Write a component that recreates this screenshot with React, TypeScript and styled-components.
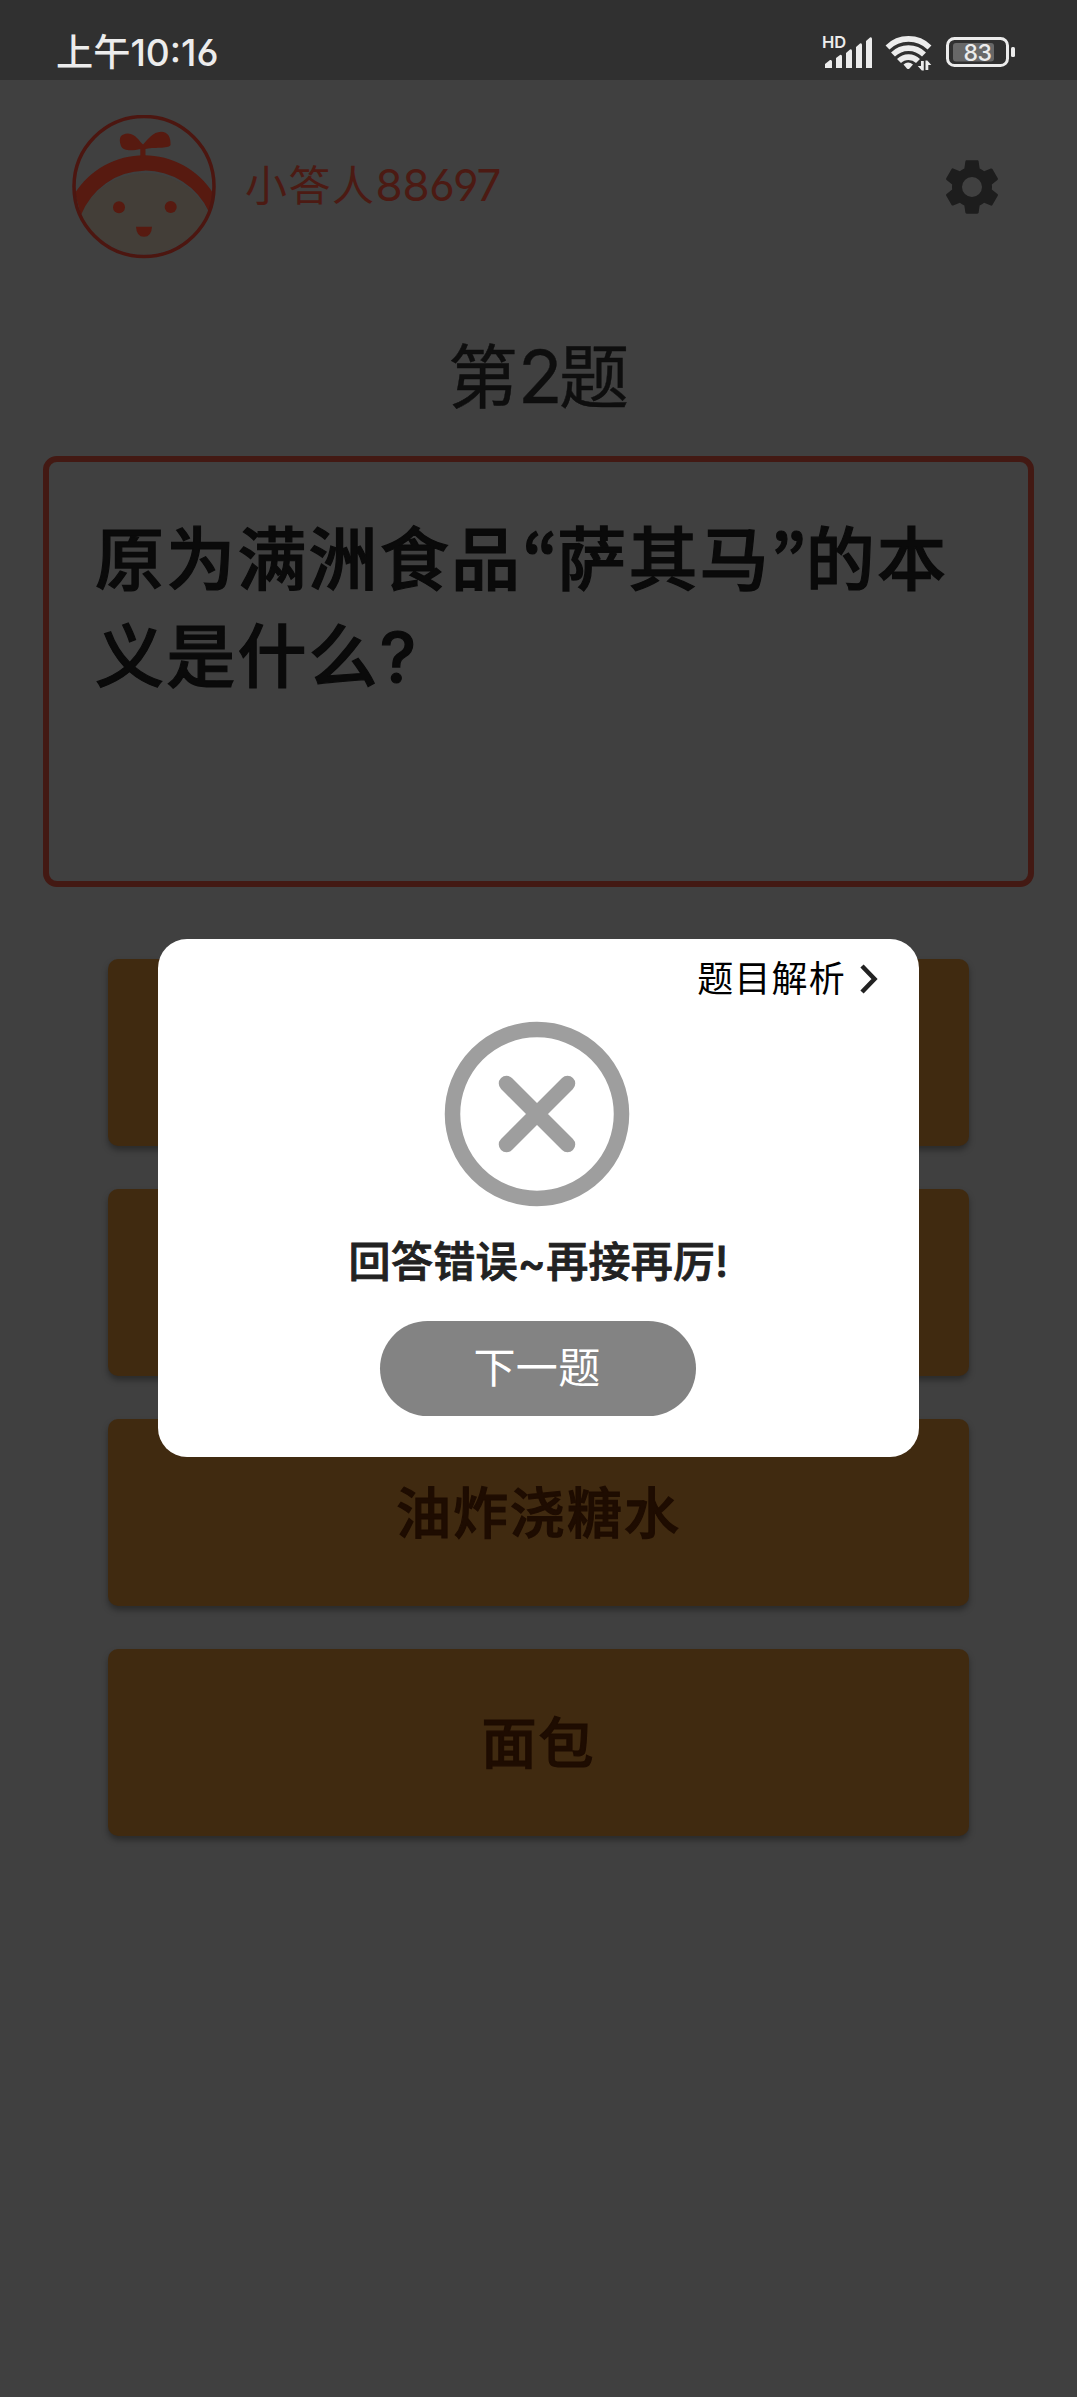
import React from "react";
import styled, { createGlobalStyle } from "styled-components";

const GlobalStyle = createGlobalStyle`
  html, body { margin: 0; padding: 0; background: #404040; }
  * { box-sizing: border-box; }
  body {
    font-family: Inter, "Noto Sans CJK SC", sans-serif;
    font-feature-settings: "cv03", "cv04";
  }
  button { font: inherit; border: 0; padding: 0; }
`;

const Screen = styled.div`
  width: 1077px;
  height: 2397px;
  display: flex;
  flex-direction: column;
  overflow: hidden;
  background: #404040;
`;

const StatusBar = styled.header`
  height: 80px;
  flex: none;
  padding: 25px 57px 0 56px;
  display: flex;
  justify-content: space-between;
  align-items: flex-start;
  background: #303030;
  color: #ececec;
`;

const Clock = styled.span`
  font-size: 37.2px;
  font-weight: 500;
  line-height: 56px;
  white-space: nowrap;
`;

const StatusIcons = styled.svg`
  display: block;
  margin-top: 7px;
`;

const Profile = styled.div`
  height: 144px;
  margin-top: 35px;
  padding: 0 73px 0 72px;
  display: flex;
  align-items: center;
  flex: none;
`;

const UserName = styled.span`
  flex: 1;
  margin-left: 29px;
  padding-bottom: 2px;
  font-size: 42px;
  letter-spacing: 1.5px;
  line-height: 60px;
  color: #4c1a13;
`;

const Digits = styled.span<{ $size: number; $spacing?: number }>`
  font-size: ${(p) => p.$size}px;
  letter-spacing: ${(p) => p.$spacing ?? 0}px;
  line-height: 1;
`;

const Gear = styled.svg`
  width: 64px;
  height: 64px;
  fill: #1d1d1d;
`;

const Heading = styled.h1`
  margin: 74px 0 0;
  height: 90px;
  flex: none;
  font-size: 70px;
  font-weight: 400;
  line-height: 90px;
  text-align: center;
  color: #0e0e0e;
  -webkit-text-stroke: 0.4px #0e0e0e;
`;

const QuestionBox = styled.section`
  height: 431px;
  margin: 33px 43px 0;
  padding: 50px 46px;
  flex: none;
  border: 6px solid #431913;
  border-radius: 14px;
`;

const Question = styled.p`
  margin: 0;
  font-size: 69px;
  font-weight: 500;
  line-height: 97px;
  letter-spacing: 2.2px;
  white-space: nowrap;
  color: #0a0a0a;
  -webkit-text-stroke: 1.2px #0a0a0a;
`;

const Quote = styled.span`
  display: inline-block;
  width: 35px;
  text-align: center;
  font-family: "Noto Sans CJK KR", sans-serif;
  font-size: 69px;
  line-height: 1;
  letter-spacing: 0;
`;

const Answers = styled.div`
  display: flex;
  flex-direction: column;
  gap: 43px;
  padding: 72px 108px 0;
`;

const Answer = styled.button`
  height: 187px;
  border-radius: 10px;
  background: #402a10;
  box-shadow: 0 4px 6px rgba(0, 0, 0, 0.35);
  color: #1e0c01;
  font-size: 55px;
  font-weight: 500;
  letter-spacing: 2px;
  line-height: 80px;
  -webkit-text-stroke: 1.2px #1e0c01;
`;

const Overlay = styled.div`
  position: absolute;
  inset: 0;
  width: 1077px;
  height: 2396px;
  display: flex;
  align-items: center;
  justify-content: center;
`;

const Dialog = styled.div`
  width: 761px;
  height: 518px;
  border-radius: 29px;
  background: #fff;
  display: flex;
  flex-direction: column;
  align-items: center;
`;

const AnalysisLink = styled.div`
  align-self: stretch;
  display: flex;
  justify-content: flex-end;
  align-items: center;
  gap: 13px;
  height: 50px;
  margin-top: 15px;
  padding-right: 40px;
  font-size: 36px;
  letter-spacing: 1.2px;
  line-height: 50px;
  color: #000;
`;

const WrongMark = styled.svg`
  margin: 17px 3px 0 0;
  flex: none;
`;

const Message = styled.p`
  margin: 25px 0 0;
  font-size: 42px;
  font-weight: 500;
  letter-spacing: 0.3px;
  line-height: 60px;
  white-space: nowrap;
  color: #222;
  -webkit-text-stroke: 0.9px #222;
`;

const NextButton = styled.button`
  width: 316px;
  height: 95px;
  margin: 29px 1px 0 0;
  padding: 0 2px 2px 0;
  border-radius: 48px;
  background: #838383;
  color: #fff;
  font-size: 42px;
  letter-spacing: 0.4px;
  line-height: 60px;
`;

function StatusGlyphs() {
  return (
    <StatusIcons width="200" height="40" viewBox="820 32 200 40" fill="#ececec">
      <text x="822" y="48.300" fontSize="16.500" fontWeight="600" fontFamily="Inter">HD</text>
      <path d="M825 68v-4l5-4q2-.5 2 1.500v6.500zM836 68V58l4-3q2-.7 2 1.500V68zM846 68V53l4-3.500q2-.7 2 1.500v17zM856 68V47l4-3.500q2-.7 2 1.500v23zM866 68V41l4-3.500q2-.7 2 1.500v29z" />
      <g fill="none" stroke="#ececec" strokeWidth="5.600">
        <path d="M887.500 47.500a30 30 0 0 1 42 0" />
        <path d="M893 54.500a22 22 0 0 1 31 0" />
        <path d="M899 61a13.500 13.500 0 0 1 19 0" />
      </g>
      <path d="M903.500 64.500q4.500-4 9.500 0l-3.500 4q-1.300 1-2.600 0z" />
      <path d="M921 61h2.800v9.500h-2l-4-4.500h3.200zM925.500 60.500h1.800l4 4.500h-3v5h-2.800z" />
      <rect x="947.500" y="38.500" width="60" height="27" rx="7" fill="none" stroke="#ececec" strokeWidth="3" />
      <rect x="953" y="43" width="41" height="18.500" rx="3" fill="#686868" />
      <rect x="1011" y="47" width="4" height="10" rx="1.500" />
      <text x="963.500" y="60.800" fontSize="23" fontWeight="500" fontFamily="Inter" textLength="28.500">83</text>
    </StatusIcons>
  );
}

function Avatar() {
  return (
    <svg width="144" height="144" viewBox="0 0 144 144">
      <path d="M9 100A70 70 0 0 1 136 97A70 70 0 0 1 9 100z" fill="#433e38" />
      <path d="M3 78A82 82 0 0 1 141 78L137 97A70 72 0 0 0 9 100z" fill="#571a10" />
      <circle cx="72" cy="71.500" r="70" fill="none" stroke="#4c1610" strokeWidth="3.500" />
      <g fill="#571a10">
        <path d="M68.300 43V34C60 36 51 36 49 31C46 22 49 19 56 18.500C64 19 67 26 71 29.500C76 24 81 17 89 16.700C96 17 99 22 98.500 30C97 34 80 32 73.500 34V43z" />
        <circle cx="47" cy="92.300" r="6" />
        <circle cx="98.700" cy="92" r="6" />
        <path d="M64 111.700H80Q79.500 121.700 72 121.700T64 111.700z" />
      </g>
    </svg>
  );
}

function SettingsIcon() {
  return (
    <Gear viewBox="0 0 24 24">
      <path
        fillRule="evenodd"
        d="M19.430 12.980c.04-.32.07-.64.07-.98s-.03-.66-.07-.98l2.110-1.650c.19-.15.24-.42.12-.64l-2-3.460c-.12-.22-.39-.3-.61-.22l-2.490 1c-.52-.4-1.080-.73-1.690-.98l-.38-2.650C14.460 2.180 14.250 2 14 2h-4c-.25 0-.46.18-.49.42l-.38 2.650c-.61.25-1.170.59-1.690.98l-2.490-1c-.23-.09-.49 0-.61.22l-2 3.460c-.13.22-.07.49.12.64l2.110 1.650c-.04.32-.07.65-.07.98s.03.66.07.98l-2.110 1.650c-.19.15-.24.42-.12.64l2 3.460c.12.22.39.3.61.22l2.490-1c.52.4 1.080.73 1.690.98l.38 2.650c.03.24.24.42.49.42h4c.25 0 .46-.18.49-.42l.38-2.650c.61-.25 1.170-.59 1.690-.98l2.490 1c.23.09.49 0 .61-.22l2-3.460c.12-.22.07-.49-.12-.64l-2.110-1.650zM12 15.750a3.750 3.750 0 1 1 0-7.500a3.750 3.750 0 1 1 0 7.500z"
      />
    </Gear>
  );
}

const ANSWERS = ["", "", "油炸浇糖水", "面包"];

export default function App() {
  return (
    <>
      <GlobalStyle />
      <Screen>
        <StatusBar>
          <Clock>上午10:16</Clock>
          <StatusGlyphs />
        </StatusBar>
        <Profile>
          <Avatar />
          <UserName>
            小答人<Digits $size={44} $spacing={-0.3}>88697</Digits>
          </UserName>
          <SettingsIcon />
        </Profile>
        <Heading>
          第<Digits $size={73} $spacing={-3.5}>2</Digits>题
        </Heading>
        <QuestionBox>
          <Question>
            原为满洲食品<Quote>“</Quote>萨其马<Quote>”</Quote>的本
            <br />
            义是什么?
          </Question>
        </QuestionBox>
        <Answers>
          {ANSWERS.map((label, i) => (
            <Answer key={i}>{label}</Answer>
          ))}
        </Answers>
      </Screen>
      <Overlay>
        <Dialog>
          <AnalysisLink>
            题目解析
            <svg width="20" height="30" viewBox="0 0 20 30" fill="none" stroke="#222" strokeWidth="4.500">
              <path d="M3 2L15.500 15L3 28" />
            </svg>
          </AnalysisLink>
          <WrongMark width="186" height="186" viewBox="0 0 186 186" fill="none" stroke="#9e9e9e">
            <circle cx="93" cy="93" r="84.500" strokeWidth="15.500" />
            <path d="M62.500 62.500L123.500 123.500M123.500 62.500L62.500 123.500" strokeWidth="15.500" strokeLinecap="round" />
          </WrongMark>
          <Message>回答错误~再接再厉!</Message>
          <NextButton>下一题</NextButton>
        </Dialog>
      </Overlay>
    </>
  );
}
